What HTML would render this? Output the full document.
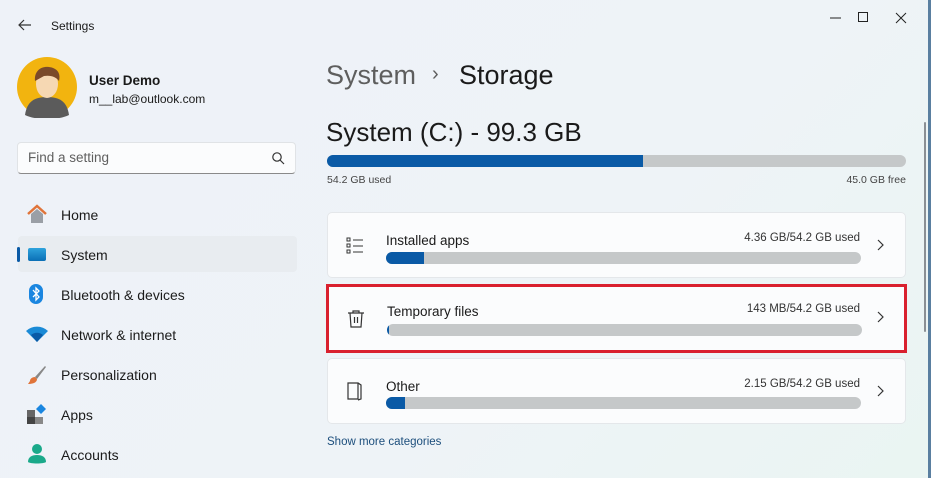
<!DOCTYPE html><html><head><style>
*{margin:0;padding:0;box-sizing:border-box}
body{width:931px;height:478px;overflow:hidden;background:linear-gradient(135deg,#eef2f8 0%,#eef3f7 60%,#eaf5f2 100%);font-family:"Liberation Sans",sans-serif;color:#1a1a1a;position:relative}
.a{position:absolute}
.nav{position:absolute;left:28px;font-size:14px;color:#1b1b1b}
.card{position:absolute;left:327px;width:579px;height:66px;background:#fbfcfd;border:1px solid #e4e7ea;border-radius:5px}
.bar{position:absolute;left:58px;width:475px;height:12px;background:#c5c8c9;border-radius:6px;overflow:hidden}
.bar i{display:block;height:100%;background:#0a5aa6}
.lbl{position:absolute;left:58px;top:20px;font-size:13.5px}
.use{position:absolute;right:45px;top:19px;font-size:11.5px;color:#333}
.chev{position:absolute;right:20px;top:26px}
</style></head><body>
<div class="a" style="right:0;top:0;width:3px;height:478px;background:#5a7fa0"></div>
<svg class="a" style="left:17px;top:18px" width="16" height="14"><path d="M14 7H2M7 2L2 7l5 5" stroke="#333" fill="none" stroke-width="1.2"/></svg>
<div class="a" style="left:51px;top:19px;font-size:12px">Settings</div>
<svg class="a" style="left:830px;top:10px" width="90" height="16"><path d="M0 8h11" stroke="#222"/><path d="M28.5 2.5h9v9h-9z" stroke="#222" fill="none"/><path d="M66 3l10 10M76 3L66 13" stroke="#222"/></svg>
<svg class="a" style="left:17px;top:57px" width="61" height="61"><circle cx="30" cy="30" r="30" fill="#f2b40f"/><path d="M8 58c2-14 10-18 22-18s20 4 22 18c-6 3-14 4-22 4s-16-1-22-4z" fill="#5b5b5b"/><ellipse cx="30" cy="27" rx="11" ry="14" fill="#f6d8b3"/><path d="M18 24c-1-10 6-15 14-14 8 1 12 6 10 14-3-4-8-6-15-5z" fill="#7a4a2a"/></svg>
<div class="a" style="left:89px;top:73px;font-size:13.5px;font-weight:bold">User Demo</div>
<div class="a" style="left:89px;top:92px;font-size:12px">m__lab@outlook.com</div>
<div class="a" style="left:17px;top:142px;width:279px;height:32px;background:#fbfcfd;border:1px solid #e0e3e6;border-bottom:1px solid #8a8a8a;border-radius:4px"></div>
<div class="a" style="left:28px;top:150px;font-size:13.5px;color:#5f5f5f">Find a setting</div>
<svg class="a" style="left:271px;top:151px" width="14" height="14"><circle cx="6" cy="6" r="4.2" stroke="#333" fill="none" stroke-width="1.2"/><path d="M9 9l4 4" stroke="#333" stroke-width="1.2"/></svg>
<div class="a" style="left:18px;top:236px;width:279px;height:36px;background:#e8ecf0;border-radius:4px"></div>
<div class="a" style="left:17px;top:247px;width:3px;height:15px;background:#0a5aa6;border-radius:2px"></div>
<svg class="a" style="left:26px;top:204px" width="22" height="20"><path d="M2 10L11 2l9 8" stroke="#e0743a" stroke-width="2.5" fill="none"/><path d="M5 10v9h12v-9l-6-5z" fill="#9a9fa6"/></svg>
<div class="a" style="left:28px;top:248px;width:18px;height:13px;background:linear-gradient(#2ea3dc,#0a6fb5);border-radius:2px"></div>
<svg class="a" style="left:29px;top:284px" width="14" height="20"><rect width="14" height="20" rx="7" fill="#1a86e0"/><path d="M4 6l6 7-3 3V4l3 3-6 6" stroke="#fff" fill="none" stroke-width="1.3"/></svg>
<svg class="a" style="left:26px;top:326px" width="22" height="16"><path d="M0 5a16 16 0 0 1 22 0L11 16z" fill="#1a8ad6"/><path d="M5 9a9 9 0 0 1 12 0L11 16z" fill="#0a5aa6"/></svg>
<svg class="a" style="left:27px;top:365px" width="20" height="20"><path d="M18 1L8 12l2 2L19 2z" fill="#888"/><path d="M8 12c-3 0-5 2-5 4l-2 3c4 0 9-1 9-5z" fill="#e0743a"/></svg>
<svg class="a" style="left:27px;top:404px" width="20" height="20"><rect x="0" y="6" width="8" height="7" fill="#666"/><rect x="0" y="13" width="8" height="7" fill="#444"/><rect x="8" y="13" width="8" height="7" fill="#888"/><path d="M14 0l5 5-5 5-5-5z" fill="#1a86e0"/></svg>
<svg class="a" style="left:28px;top:443px" width="18" height="22"><circle cx="9" cy="6" r="5" fill="#1aa98a"/><path d="M0 19c0-5 4-7 9-7s9 2 9 7c-2 2-16 2-18 0z" fill="#1aa98a"/></svg>
<div class="nav" style="left:61px;top:207px">Home</div>
<div class="nav" style="left:61px;top:247px">System</div>
<div class="nav" style="left:61px;top:287px">Bluetooth &amp; devices</div>
<div class="nav" style="left:61px;top:327px">Network &amp; internet</div>
<div class="nav" style="left:61px;top:367px">Personalization</div>
<div class="nav" style="left:61px;top:407px">Apps</div>
<div class="nav" style="left:61px;top:447px">Accounts</div>
<div class="a" style="left:326px;top:60px;font-size:27px;color:#5e5e5e">System</div>
<div class="a" style="left:432px;top:63px;font-size:20px;color:#5e5e5e">›</div>
<div class="a" style="left:459px;top:60px;font-size:27px">Storage</div>
<div class="a" style="left:326px;top:117px;font-size:26px">System (C:) - 99.3 GB</div>
<div class="a" style="left:327px;top:155px;width:579px;height:12px;background:#c5c8c9;border-radius:6px;overflow:hidden"><div style="width:316px;height:100%;background:#0a5aa6"></div></div>
<div class="a" style="left:327px;top:174px;font-size:10.5px;color:#444">54.2 GB used</div>
<div class="a" style="right:25px;top:174px;font-size:10.5px;color:#444">45.0 GB free</div>
<div class="a" style="left:924px;top:122px;width:2px;height:210px;background:#8a8f94;border-radius:1px"></div>
<div class="card" style="top:212px">
<svg class="a" style="left:18px;top:24px" width="18" height="18"><rect x="1" y="1" width="3" height="3" stroke="#333" fill="none"/><rect x="1" y="7" width="3" height="3" stroke="#333" fill="none"/><rect x="1" y="13" width="3" height="3" stroke="#333" fill="none"/><path d="M7 3h10M7 9h10M7 15h10" stroke="#333"/></svg>
<div class="lbl">Installed apps</div><div class="use">4.36 GB/54.2 GB used</div>
<div class="bar" style="top:39px"><i style="width:38px"></i></div>
<svg class="chev" width="8" height="12"><path d="M1 1l5 5-5 5" stroke="#333" fill="none" stroke-width="1.2"/></svg></div>
<div class="card" style="top:284px;height:69px;border:3px solid #d9202e;border-radius:0;left:326px;width:581px">
<svg class="a" style="left:18px;top:22px" width="18" height="20"><path d="M1 4h16M6 4V2h6v2M3 4l1 14h10l1-14M7.5 8v6M10.5 8v6" stroke="#333" fill="none" stroke-width="1.2"/></svg>
<div class="lbl" style="top:17px">Temporary files</div><div class="use" style="right:44px;top:16px">143 MB/54.2 GB used</div>
<div class="bar" style="top:37px"><i style="width:2px"></i></div>
<svg class="chev" style="right:19px;top:24px" width="8" height="12"><path d="M1 1l5 5-5 5" stroke="#333" fill="none" stroke-width="1.2"/></svg></div>
<div class="card" style="top:358px">
<svg class="a" style="left:18px;top:21px" width="18" height="22"><path d="M2 3h10v16H2zM12 3l3 2v14l-3 1" stroke="#333" fill="none" stroke-width="1.2"/></svg>
<div class="lbl">Other</div><div class="use">2.15 GB/54.2 GB used</div>
<div class="bar" style="top:38px"><i style="width:19px"></i></div>
<svg class="chev" width="8" height="12"><path d="M1 1l5 5-5 5" stroke="#333" fill="none" stroke-width="1.2"/></svg></div>
<div class="a" style="left:327px;top:436px;font-size:11.5px;color:#1c4e7c">Show more categories</div>
</body></html>
